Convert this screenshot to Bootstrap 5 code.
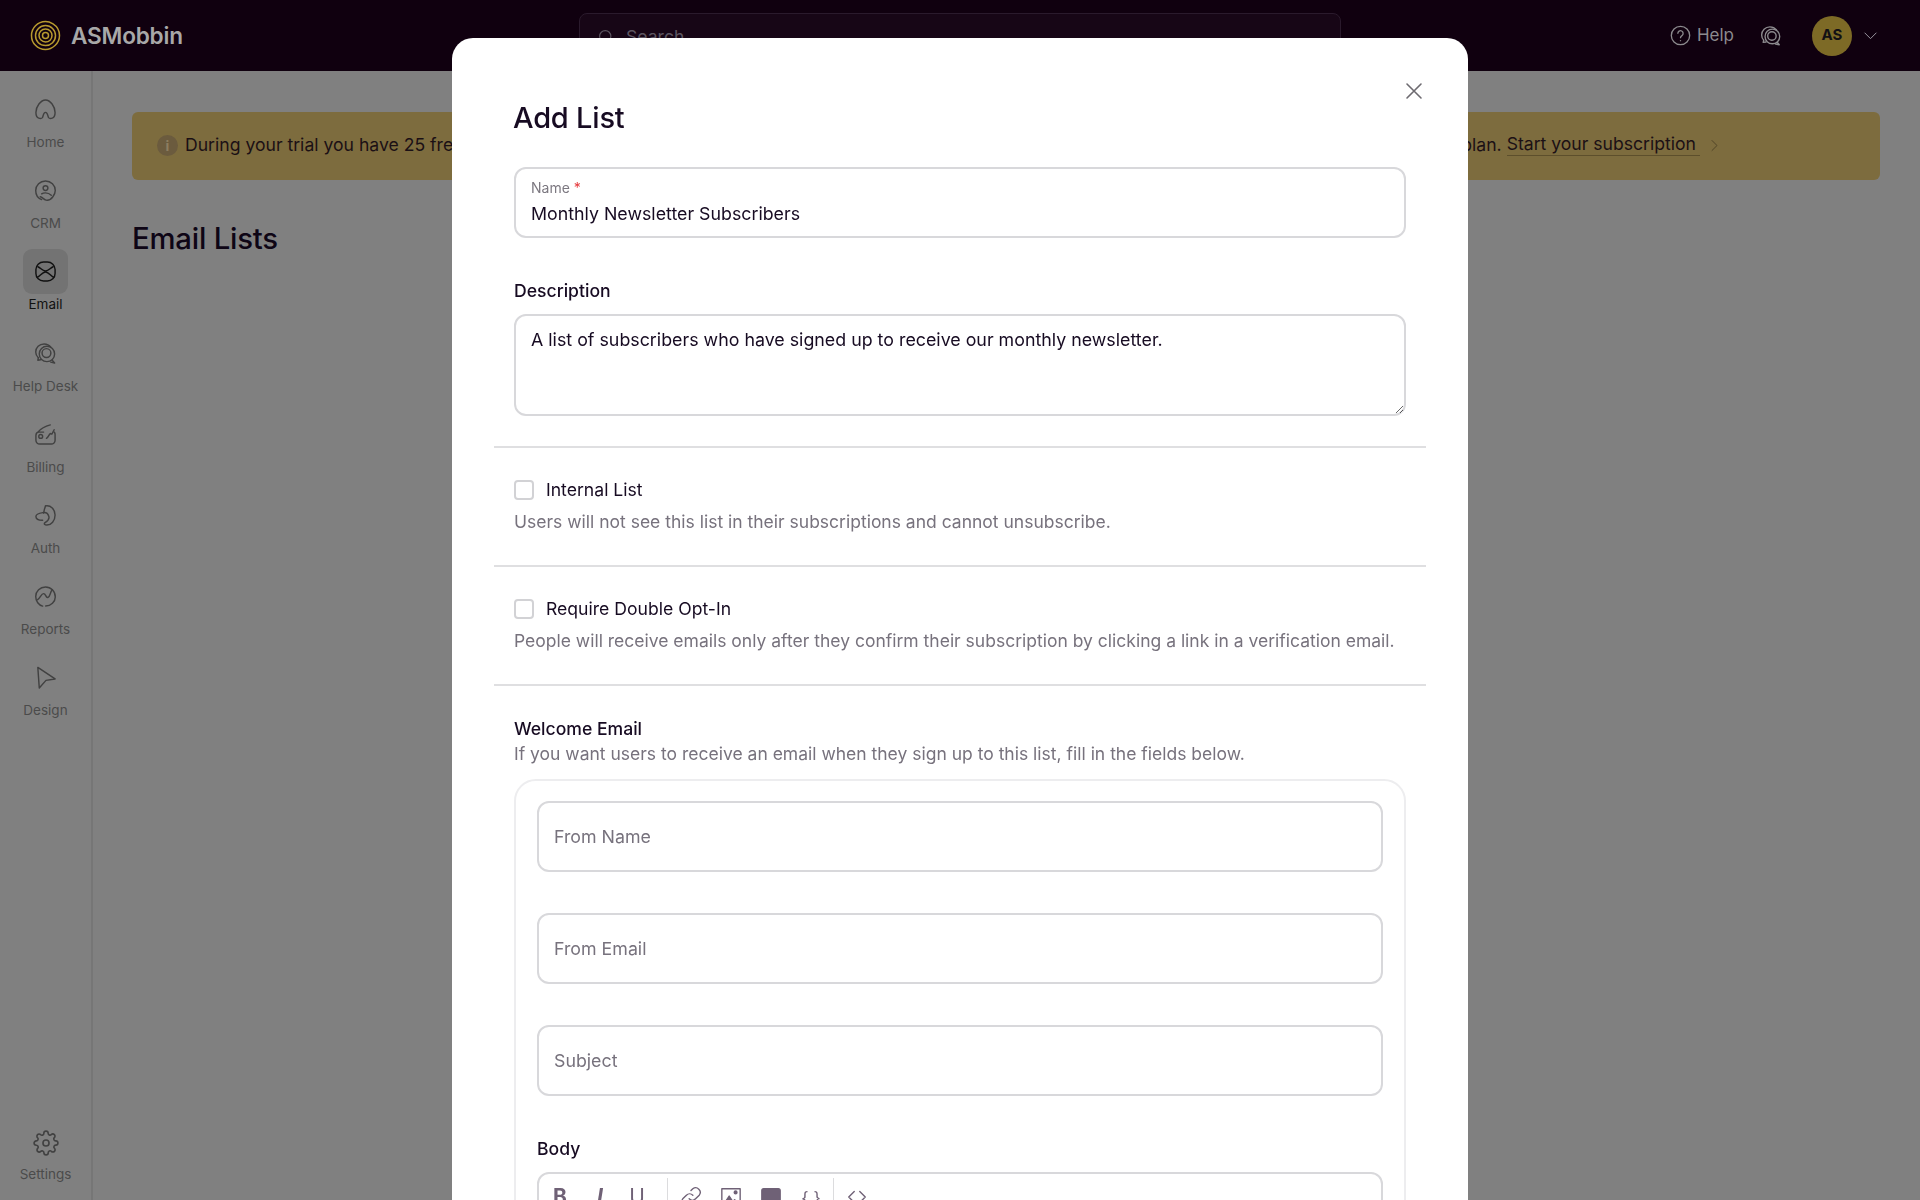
<!DOCTYPE html>
<html lang="en">
<head>
  <meta charset="UTF-8" />
  <title>Email Lists</title>
  <meta name="viewport" content="width=device-width, initial-scale=1">
  <link href="https://cdn.jsdelivr.net/npm/bootstrap@5.3.3/dist/css/bootstrap.min.css" rel="stylesheet">
  <script src="https://cdn.jsdelivr.net/npm/bootstrap@5.3.3/dist/js/bootstrap.bundle.min.js"></script>
  <style>
    html, body { height: 100%; overflow: hidden; }
    body { background: #808080; font-family: Inter, "Liberation Sans", sans-serif; color: #170b22; }
    svg { display: block; fill: none; stroke: currentColor; stroke-width: 1.5; stroke-linecap: round; stroke-linejoin: round; }

    .top-bar { height: 71px; background: #10000f; padding: 0 42px 0 30px; }
    .brand-name { font-size: 22.6px; font-weight: 600; color: #a8a8a8; margin-left: 10px; letter-spacing: -.2px; }
    .brand-logo { color: #b89a2f; }
    .search-slot { position: absolute; left: 579px; top: 13px; width: 762px; height: 46px; border: 1px solid #2a1a2c; border-radius: 8px; background: #170616; color: #5c5560; padding: 2px 0 0 17px; font-size: 17.6px; gap: 11px; }
    .top-link { color: #8c8a8e; font-size: 17px; }
    .user-dot { width: 40px; height: 40px; border-radius: 50%; background: #7d6a26; color: #121014; font-size: 15px; font-weight: 700; }
    .user-caret { color: #a09da6; margin-left: 11px; }

    .side-rail { width: 93px; border-right: 2px solid #767676; padding-top: 2px; }
    .rail-item { height: 81.2px; padding-top: 25px; color: #4b4b4b; font-size: 13.5px; text-align: center; }
    .rail-item svg { width: 23px; height: 23px; margin: 0 auto 11px; color: #414141; }
    .rail-item.is-active { color: #111; }
    .rail-item.is-active svg { color: #111; position: relative; z-index: 1; }
    .rail-tile { width: 45px; height: 45px; margin: -11px auto 0; padding-top: 11px; background: #737373; border-radius: 9px; }
    .rail-item.is-active .rail-tile + span { display: block; margin-top: 0; }

    .main-pane { padding: 41px 40px 0 39px; }
    .trial-bar { height: 68px; background: #7d6c3e; border-radius: 6px; padding: 0 158px 2px 25px; font-size: 17.6px; color: #1b1015; }
    .trial-dot { width: 21px; height: 21px; border-radius: 50%; background: #6b5b3e; color: #8c7d60; font-size: 14px; font-weight: 700; margin: 2px 7px 0 0; }
    .trial-link { color: #1b1015; text-decoration: none; border-bottom: 1px solid #5d4f2c; padding-right: 4px; line-height: 22px; display: inline-block; }
    .trial-caret { color: #4e4225; margin: 2px 0 0 7px; }
    .page-title { font-size: 29.3px; font-weight: 500; margin: 41px 0 0; color: #0e0515; letter-spacing: -.2px; }

    .modal-sheet { position: fixed; left: 452px; top: 38px; width: 1016px; height: 1300px; background: #fff; border-radius: 21px; padding: 0 62px; }
    .sheet-title { font-size: 29px; font-weight: 500; margin: 0 0 0 -1px; padding-top: 62px; line-height: 36px; color: #170b22; letter-spacing: -.2px; }
    .sheet-close { position: absolute; right: 45px; top: 44px; width: 18px; height: 18px; color: #6d6a70; }
    .sheet-close svg { width: 18px; height: 18px; stroke-width: 1.6; }

    .field-shell { height: 71px; border: 2px solid #d8d8db; border-radius: 12px; padding: 0 15px; }
    .name-shell { margin-top: 31px; padding-top: 10px; }
    .name-shell label { font-size: 14px; color: #7c7880; display: block; line-height: 18px; }
    .name-shell label b { color: #e5383b; font-weight: 400; }
    .plain-value { border: 0; outline: 0; padding: 0; width: 100%; font-size: 17.8px; color: #170b22; line-height: 24px; margin-top: 5px; }
    .field-label { font-size: 17.6px; font-weight: 500; color: #170b22; line-height: 24px; margin: 0; }
    .form-control.desc-area { height: 102px; border: 2px solid #d8d8db; border-radius: 12px; padding: 12px 15px; font-size: 17.82px; color: #170b22; line-height: 24px; margin-top: 11px; font-family: inherit; }
    .sheet-rule { height: 2px; background: #dfdfe1; margin: 0 -20px; }
    .form-check-input.tick-box { width: 20px; height: 20px; margin: 0; border: 2px solid #d2d2d5; border-radius: 4px; }
    .tick-label { font-size: 17.6px; color: #170b22; line-height: 24px; margin-left: 12px; }
    .hint-text { font-size: 17.5px; color: #77727d; line-height: 24px; margin: 8px 0 0; }
    .welcome-box { margin-top: 13px; border: 2px solid #ededef; border-radius: 22px; padding: 20px 21px; }
    .welcome-box .form-control { height: 71px; border: 2px solid #d8d8db; border-radius: 12px; padding: 0 15px; font-size: 17.8px; color: #170b22; }
    .welcome-box .form-control::placeholder { color: #77727d; opacity: 1; }
    .editor-shell { margin-top: 11px; border: 2px solid #d8d8db; border-radius: 12px; height: 200px; padding-top: 11px; color: #6f6176; }
    .tool-cell { width: 40px; height: 24px; font-size: 21px; line-height: 24px; text-align: center; }
    .tool-cell svg { width: 22px; height: 22px; margin: 1px auto 0; }
    .tool-cell.tool-narrow { width: 34px; }
    .tool-sep { width: 1px; height: 30px; background: #dcdcde; margin: -7px 3px 0 2px; }
  </style>
</head>
<body>
  <div class="d-flex flex-column h-100">
    <header class="top-bar d-flex align-items-center flex-shrink-0">
      <svg class="brand-logo" width="31" height="31" viewBox="0 0 31 31" stroke-width="1.8">
        <path d="M15.5 1.5c3 0 5 .8 7.500 2.300 4 2.500 6.500 6.700 6.500 11.700 0 4.500-1.700 7.500-4.500 10-2.500 2.300-5.500 4-9.500 4-4.500 0-7.500-1.500-10-4.200C3 23 1.500 20 1.500 15.500c0-4 1.500-7.200 4-9.700 2.700-2.800 6-4.300 10-4.300z"/>
        <path d="M15.500 5.500c5.500 0 10 4.500 10 10 0 5.800-4.500 10-10 10-5.800 0-10-4.200-10-10 0-5.500 4.500-10 10-10z"/><path d="M15.500 9c4 0 6.500 3 6.500 6.500 0 3.800-3 6.500-6.500 6.500S9 19 9 15.500 11.500 9 15.500 9z"/><circle cx="15.500" cy="15.500" r="3"/>
      </svg>
      <span class="brand-name">ASMobbin</span>
      <div class="search-slot d-flex align-items-center">
        <svg width="18" height="18" viewBox="0 0 24 24" stroke-width="2"><circle cx="11" cy="11" r="7.500"/><path d="M17 17l4.500 4.500"/></svg>
        <span>Search</span>
      </div>
      <div class="ms-auto d-flex align-items-center">
        <span class="top-link d-flex align-items-center">
          <svg width="21" height="21" viewBox="0 0 24 24"><circle cx="12" cy="12" r="10.500"/><path d="M9 9.500a3 3 0 1 1 4.800 2.400c-1.100.8-1.800 1.400-1.800 2.600M12 17.800v.1"/></svg>
          <span style="margin-left:6px">Help</span>
        </span>
        <svg class="top-link" style="margin-left:26px" width="22" height="22" viewBox="0 0 24 24"><path d="M4 16.500C2.500 15 1.800 13 1.800 11c0-5 4-9 9-9 3 0 5.500 1.300 7.200 3.500"/><circle cx="13.500" cy="12.500" r="8"/><circle cx="13" cy="12" r="4.600"/><path d="M4 16.500l-.5 2.500 3-.5M19 19l2 2.500-4-.8"/></svg>
        <div class="user-dot d-flex align-items-center justify-content-center" style="margin-left:30px">AS</div>
        <svg class="user-caret" width="15" height="15" viewBox="0 0 24 24" stroke-width="3.500"><path d="M3 8l9 9 9-9"/></svg>
      </div>
    </header>

    <div class="d-flex flex-grow-1 overflow-hidden">
      <nav class="side-rail d-flex flex-column flex-shrink-0">
        <div class="rail-item"><svg viewBox="0 0 24 24"><path d="M5 21c-2-.8-3-3-3-6C2 9 7 2 12 2s10 7 10 13c0 3-1 5.200-3 6-1.500.6-3 .4-3.800-.5-1-1.200-.6-5.500-3.200-5.500s-2.200 4.300-3.200 5.500c-.8.900-2.300 1.100-3.800.5z"/></svg><span>Home</span></div>
        <div class="rail-item"><svg viewBox="0 0 24 24"><path d="M8 21.500C4 20 1.800 16.500 1.800 12 1.800 6.500 6.300 2 12 2s10.200 4.500 10.200 10c0 2.500-1 4.500-2.500 6.500-2 2.800-4.800 4-7.200 3.500-2.500-.5-3.500-3-6-3.500"/><circle cx="12" cy="9.500" r="2.500"/><path d="M18 17c-1.500-1.500-3.500-2.500-6-2.500-1.500 0-3 .3-4 1"/></svg><span>CRM</span></div>
        <div class="rail-item is-active"><div class="rail-tile"><svg viewBox="0 0 24 24" stroke-width="2"><rect x="2" y="2" width="20" height="20" rx="8"/><path d="M4 7c3 1 4.500 4.500 8 4.500S17 8 20 7M3.500 18c3-1 5-5.500 8.500-5.500s5.500 4.500 8.500 5.500"/></svg></div><span>Email</span></div>
        <div class="rail-item"><svg viewBox="0 0 24 24"><path d="M4.500 16.500C2.800 15 1.800 13 1.800 10.500 1.800 5.800 5.500 2 10.500 2c3 0 5.500 1.300 7 3.500"/><circle cx="13.500" cy="12.500" r="8"/><circle cx="13" cy="11.500" r="4.600"/><path d="M4.500 16.500l-.5 2.500 3-.5M19 19l2.500 3-4-1"/></svg><span>Help Desk</span></div>
        <div class="rail-item"><svg viewBox="0 0 24 24"><path d="M2 13v5a4 4 0 0 0 4 4h12a4 4 0 0 0 4-4v-6a3 3 0 0 0-1-2.500M4 9.500C7 6 11 3.500 17 2M2 13c0-2 1-3.500 3-3.500h5"/><circle cx="7" cy="14" r="2"/><path d="M13 16c2-1 2.500-4 4-5 .8-.5 1 1.500 2 0l2-4"/></svg><span>Billing</span></div>
        <div class="rail-item"><svg viewBox="0 0 24 24"><path d="M12 2c5.500-1 10 3.500 10 9.500 0 6-4 10.500-8.500 10.500-2.500 0-3.500-1.500-2-2.500 2.500-1.500 5-3 4-6.500-.8-2.800-3-4.500-6-4C6 9.500 2 10 2 13s3.500 4 7 4"/><path d="M10 9.500c.5-2 .5-3.500 2-7.500"/></svg><span>Auth</span></div>
        <div class="rail-item"><svg viewBox="0 0 24 24"><path d="M9 22C5 21 1.800 17 1.800 12 1.800 6.500 6.300 2 12 2s10.200 4.500 10.200 10.500c0 5-4.500 9.500-10 9.500"/><path d="M3.500 15.500c3-1.500 4-6.500 6.500-6.500s2 4.500 4.500 4c2.500-.5 2-5 4.500-8"/></svg><span>Reports</span></div>
        <div class="rail-item"><svg viewBox="0 0 24 24"><path d="M4 1.500l18 12-9.500 1.500L5.500 23z"/></svg><span>Design</span></div>
        <div class="rail-item mt-auto" style="height:70px;padding-top:0"><svg style="width:26px;height:26px;margin-bottom:8px" viewBox="0 0 24 24"><circle cx="12" cy="12" r="2.800"/><path d="M19.400 15a1.650 1.650 0 0 0 .33 1.820l.06.06a2 2 0 0 1 0 2.830 2 2 0 0 1-2.830 0l-.06-.06a1.650 1.650 0 0 0-1.820-.33 1.650 1.650 0 0 0-1 1.510V21a2 2 0 0 1-2 2 2 2 0 0 1-2-2v-.09A1.650 1.650 0 0 0 9 19.400a1.650 1.650 0 0 0-1.820.33l-.06.06a2 2 0 0 1-2.830 0 2 2 0 0 1 0-2.830l.06-.06a1.650 1.650 0 0 0 .33-1.820 1.650 1.650 0 0 0-1.510-1H3a2 2 0 0 1-2-2 2 2 0 0 1 2-2h.09A1.650 1.650 0 0 0 4.600 9a1.650 1.650 0 0 0-.33-1.820l-.06-.06a2 2 0 0 1 0-2.830 2 2 0 0 1 2.830 0l.06.06a1.650 1.650 0 0 0 1.820.33H9a1.650 1.650 0 0 0 1-1.510V3a2 2 0 0 1 2-2 2 2 0 0 1 2 2v.09a1.650 1.650 0 0 0 1 1.510 1.650 1.650 0 0 0 1.820-.33l.06-.06a2 2 0 0 1 2.830 0 2 2 0 0 1 0 2.830l-.06.06a1.650 1.650 0 0 0-.33 1.820V9a1.650 1.650 0 0 0 1.510 1H21a2 2 0 0 1 2 2 2 2 0 0 1-2 2h-.09a1.650 1.650 0 0 0-1.510 1z"/></svg><span>Settings</span></div>
      </nav>

      <main class="main-pane flex-grow-1">
        <div class="trial-bar d-flex align-items-center justify-content-between">
          <div class="d-flex align-items-center">
            <span class="trial-dot d-flex align-items-center justify-content-center">i</span>
            <span>During your trial you have 25 free emails per day.</span>
          </div>
          <div class="d-flex align-items-center">
            <span>To send more, choose a plan.&nbsp;</span><a class="trial-link" href="#">Start your subscription</a>
            <svg class="trial-caret" width="15" height="15" viewBox="0 0 24 24" stroke-width="3"><path d="M8 4l8 8-8 8"/></svg>
          </div>
        </div>
        <h1 class="page-title">Email Lists</h1>
      </main>
    </div>
  </div>

  <div class="modal-sheet">
    <h2 class="sheet-title">Add List</h2>
    <div class="sheet-close"><svg viewBox="0 0 18 18"><path d="M2 2l14 14M16 2L2 16"/></svg></div>

    <div class="field-shell name-shell">
      <label for="listName">Name <b>*</b></label>
      <input id="listName" class="plain-value" type="text" value="Monthly Newsletter Subscribers">
    </div>

    <label class="field-label d-block" style="margin-top:41px" for="listDesc">Description</label>
    <textarea id="listDesc" class="form-control desc-area">A list of subscribers who have signed up to receive our monthly newsletter.</textarea>

    <div class="sheet-rule" style="margin-top:30px"></div>
    <div class="d-flex align-items-center" style="margin-top:30px">
      <input class="form-check-input tick-box" type="checkbox" id="internalList">
      <label class="tick-label" for="internalList">Internal List</label>
    </div>
    <p class="hint-text">Users will not see this list in their subscriptions and cannot unsubscribe.</p>

    <div class="sheet-rule" style="margin-top:31px"></div>
    <div class="d-flex align-items-center" style="margin-top:30px">
      <input class="form-check-input tick-box" type="checkbox" id="doubleOpt">
      <label class="tick-label" for="doubleOpt">Require Double Opt-In</label>
    </div>
    <p class="hint-text">People will receive emails only after they confirm their subscription by clicking a link in a verification email.</p>

    <div class="sheet-rule" style="margin-top:31px"></div>
    <p class="field-label" style="margin-top:31px">Welcome Email</p>
    <p class="hint-text" style="margin-top:1px">If you want users to receive an email when they sign up to this list, fill in the fields below.</p>

    <div class="welcome-box">
      <input class="form-control" type="text" placeholder="From Name">
      <input class="form-control" style="margin-top:41px" type="text" placeholder="From Email">
      <input class="form-control" style="margin-top:41px" type="text" placeholder="Subject">
      <p class="field-label" style="margin-top:41px">Body</p>
      <div class="editor-shell d-flex">
        <div class="tool-cell fw-bold" style="margin-left:1px">B</div>
        <div class="tool-cell fst-italic fw-bold">I</div>
        <div class="tool-cell tool-narrow text-decoration-underline">U</div>
        <div class="tool-sep" style="margin-left:13px"></div>
        <div class="tool-cell"><svg viewBox="0 0 24 24" stroke-width="2"><path d="M10 14a5 5 0 0 0 7 0l4-4a5 5 0 0 0-7-7l-2 2"/><path d="M14 10a5 5 0 0 0-7 0l-4 4a5 5 0 0 0 7 7l2-2"/></svg></div>
        <div class="tool-cell"><svg viewBox="0 0 24 24" stroke-width="2"><rect x="2" y="3" width="20" height="18"/><path d="M4 20l6-9 4 6 2-2 4 5z" fill="currentColor"/><circle cx="17" cy="7" r="1.500" fill="currentColor"/></svg></div>
        <div class="tool-cell"><svg viewBox="0 0 24 24" fill="currentColor" stroke="none"><path d="M4 3h16a2 2 0 0 1 2 2v11H2V5a2 2 0 0 1 2-2zM2 18h20v1a2 2 0 0 1-2 2H4a2 2 0 0 1-2-2z" fill="currentColor"/></svg></div>
        <div class="tool-cell" style="font-size:17px;line-height:26px">{ }</div>
        <div class="tool-sep"></div>
        <div class="tool-cell"><svg viewBox="0 0 24 24" stroke-width="2"><path d="M9 6l-6 6 6 6M15 6l6 6-6 6"/></svg></div>
      </div>
    </div>
  </div>
</body>
</html>
